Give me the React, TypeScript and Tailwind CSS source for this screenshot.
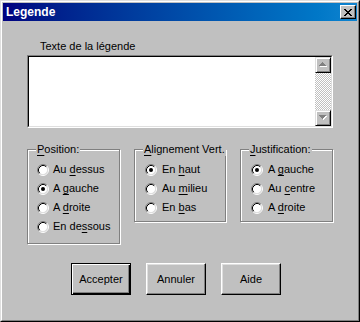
import React from "react";

const FONT = "font-['Liberation_Sans',Arial,sans-serif]";

function Radio({ checked }: { checked?: boolean }) {
  return (
    <svg width="12" height="12" viewBox="0 0 12 12" className="shrink-0">
      <circle cx="6" cy="6" r="4.5" fill="#fff" />
      <path d="M2.11 9.89 A5.5 5.5 0 0 1 9.89 2.11" stroke="#808080" fill="none" />
      <path d="M9.89 2.11 A5.5 5.5 0 0 1 2.11 9.89" stroke="#fff" fill="none" />
      <path d="M2.82 9.18 A4.5 4.5 0 0 1 9.18 2.82" stroke="#000" fill="none" />
      <path d="M9.18 2.82 A4.5 4.5 0 0 1 2.82 9.18" stroke="#dfdfdf" fill="none" />
      {checked && <circle cx="6" cy="6" r="2" fill="#000" />}
    </svg>
  );
}

function Option({ pre, key_, post, checked, gap }: { pre: string; key_: string; post: string; checked?: boolean; gap: string }) {
  return (
    <div className={`h-[19px] flex items-center ${gap}`}>
      <Radio checked={checked} />
      <span className="whitespace-pre leading-[13px]">
        {pre}
        <span className="underline underline-offset-[2px]">{key_}</span>
        {post}
      </span>
    </div>
  );
}

function Group({
  legendKey,
  legendRest,
  className,
  children,
}: {
  legendKey: string;
  legendRest: string;
  className: string;
  children: React.ReactNode;
}) {
  return (
    <div className={`relative border border-[#808080] shadow-[inset_1px_1px_0_#fff,1px_1px_0_#fff] ${className}`}>
      <div className="absolute top-[-7px] left-[8px] bg-[#c0c0c0] px-px leading-[13px] whitespace-pre">
        <span className="underline underline-offset-[2px]">{legendKey}</span>
        {legendRest}
      </div>
      {children}
    </div>
  );
}

function Arrow({ up }: { up?: boolean }) {
  const pts = up ? "3,0 4,0 7,4 0,4" : "0,0 7,0 4,4 3,4";
  return (
    <svg width="9" height="6" viewBox="0 0 9 6" shapeRendering="crispEdges">
      <g transform="translate(1,1)">
        <polygon points={up ? "3.5,0 7,4 0,4" : "0,0 7,0 3.5,4"} fill="#fff" />
      </g>
      <polygon points={up ? "3.5,0 7,4 0,4" : "0,0 7,0 3.5,4"} fill="#808080" data-p={pts} />
    </svg>
  );
}

function ScrollBtn({ up }: { up?: boolean }) {
  return (
    <div className="w-[16px] h-[16px] bg-[#c0c0c0] border border-t-[#dfdfdf] border-l-[#dfdfdf] border-b-black border-r-black shadow-[inset_1px_1px_0_#fff,inset_-1px_-1px_0_#808080] flex items-center justify-center">
      <Arrow up={up} />
    </div>
  );
}

function Btn({ label, isDefault }: { label: string; isDefault?: boolean }) {
  return (
    <button
      className={
        isDefault
          ? "w-[60px] h-[32px] bg-[#c0c0c0] border border-black shadow-[inset_1px_1px_0_#fff,inset_-1px_-1px_0_#000,inset_-2px_-2px_0_#808080] text-[11px] text-black"
          : "w-[60px] h-[32px] bg-[#c0c0c0] border border-t-white border-l-white border-b-black border-r-black shadow-[inset_-1px_-1px_0_#808080,inset_1px_1px_0_#dfdfdf] text-[11px] text-black"
      }
    >
      {label}
    </button>
  );
}

function CloseGlyph() {
  const rows = ["11000011", "01100110", "00111100", "00011000", "00111100", "01100110", "11000011"];
  return (
    <svg width="8" height="7" viewBox="0 0 8 7" shapeRendering="crispEdges">
      {rows.flatMap((r, y) =>
        r.split("").map((c, x) => (c === "1" ? <rect key={`${x}-${y}`} x={x} y={y} width="1" height="1" fill="#000" /> : null))
      )}
    </svg>
  );
}

export default function App() {
  return (
    <div className={`w-[360px] h-[322px] bg-[#c0c0c0] border border-t-[#dfdfdf] border-l-[#dfdfdf] border-b-black border-r-black text-[11px] text-black ${FONT}`}>
      <div className="h-full border border-t-white border-l-white border-b-[#808080] border-r-[#808080] p-px flex flex-col">
        {/* title bar */}
        <div className="h-[18px] shrink-0 flex items-center justify-between bg-linear-to-r from-[#000080] to-[#1084d0] pl-[3px] pr-[1px]">
          <span className="text-white font-bold text-[12px] leading-[14px]">Legende</span>
          <div className="w-[16px] h-[14px] bg-[#c0c0c0] border border-t-white border-l-white border-b-black border-r-black shadow-[inset_-1px_-1px_0_#808080] flex items-center justify-center">
            <CloseGlyph />
          </div>
        </div>

        {/* body */}
        <div className="flex-1 flex flex-col items-start">
          <div className="mt-[19px] ml-[37px] leading-[13px]">Texte de la légende</div>

          <div className="mt-[2px] ml-[24px] w-[306px] h-[73px] border border-t-[#808080] border-l-[#808080] border-b-white border-r-white">
            <div className="h-full border border-t-black border-l-black border-b-[#dfdfdf] border-r-[#dfdfdf] bg-white flex justify-end">
              <div className="w-[16px] h-full flex flex-col">
                <ScrollBtn up />
                <div className="flex-1 bg-[repeating-conic-gradient(#c0c0c0_0%_25%,#fff_0%_50%)] bg-[length:2px_2px]" />
                <ScrollBtn />
              </div>
            </div>
          </div>

          <div className="mt-[21px] ml-[24px] flex items-start">
            <Group legendKey="P" legendRest="osition:" className="w-[93px] h-[95px] pt-[10px] pl-[9px]">
              <Option pre="Au " key_="d" post="essus" gap="gap-[4px]" />
              <Option pre="A " key_="g" post="auche" gap="gap-[4px]" checked />
              <Option pre="A " key_="d" post="roite" gap="gap-[4px]" />
              <Option pre="En de" key_="s" post="sous" gap="gap-[4px]" />
            </Group>
            <Group legendKey="A" legendRest="lignement Vert." className="ml-[14px] w-[92px] h-[73px] pt-[10px] pl-[10px]">
              <Option pre="En " key_="h" post="aut" gap="gap-[5px]" checked />
              <Option pre="Au " key_="m" post="ilieu" gap="gap-[5px]" />
              <Option pre="En " key_="b" post="as" gap="gap-[5px]" />
            </Group>
            <Group legendKey="J" legendRest="ustification:" className="ml-[14px] w-[93px] h-[73px] pt-[10px] pl-[10px]">
              <Option pre="A " key_="g" post="auche" gap="gap-[5px]" checked />
              <Option pre="Au " key_="c" post="entre" gap="gap-[5px]" />
              <Option pre="A " key_="d" post="roite" gap="gap-[5px]" />
            </Group>
          </div>

          <div className="mt-[19px] ml-[68px] flex gap-[15px]">
            <Btn label="Accepter" isDefault />
            <Btn label="Annuler" />
            <Btn label="Aide" />
          </div>
        </div>
      </div>
    </div>
  );
}
